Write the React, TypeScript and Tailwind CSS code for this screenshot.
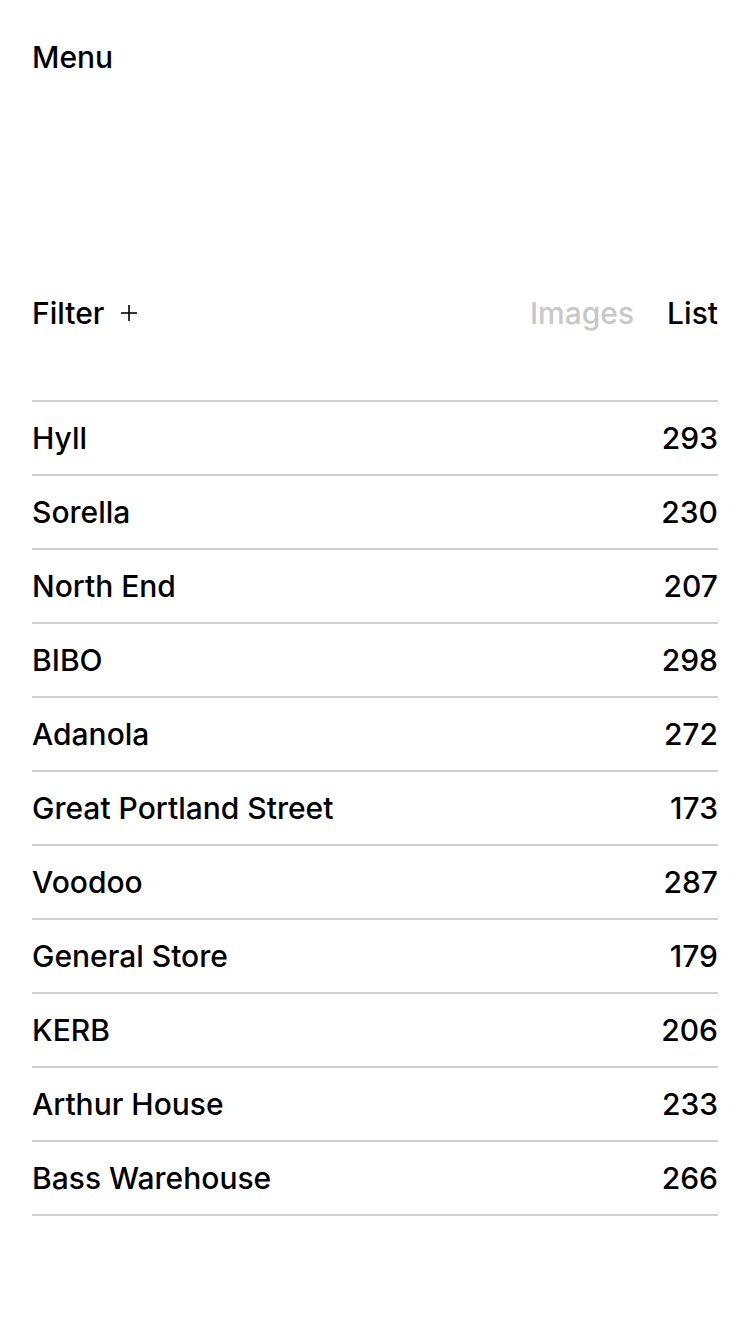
const venues = [
  { name: "Hyll", count: 293 },
  { name: "Sorella", count: 230 },
  { name: "North End", count: 207 },
  { name: "BIBO", count: 298 },
  { name: "Adanola", count: 272 },
  { name: "Great Portland Street", count: 173 },
  { name: "Voodoo", count: 287 },
  { name: "General Store", count: 179 },
  { name: "KERB", count: 206 },
  { name: "Arthur House", count: 233 },
  { name: "Bass Warehouse", count: 266 },
];

export default function App() {
  return (
    <div className="min-h-screen bg-white px-8 text-black font-['Inter',sans-serif] text-[30px] font-medium leading-none">
      <header className="pt-[42px]">
        <span>Menu</span>
      </header>

      <div className="mt-[226px] flex items-center justify-between h-[30px]">
        <div className="flex items-center gap-4">
          <span>Filter</span>
          <svg width="18" height="18" viewBox="0 0 18 18" className="stroke-black" strokeWidth="1.6">
            <line x1="9" y1="1" x2="9" y2="17" />
            <line x1="1" y1="9" x2="17" y2="9" />
          </svg>
        </div>
        <div className="flex items-center gap-[33px]">
          <span className="text-[#c8c8c8]">Images</span>
          <span>List</span>
        </div>
      </div>

      <ul className="mt-[72px] border-t-2 border-[#d0d0d0]">
        {venues.map((v) => (
          <li
            key={v.name}
            className="flex h-[74px] items-center justify-between border-b-2 border-[#d0d0d0]"
          >
            <span>{v.name}</span>
            <span>{v.count}</span>
          </li>
        ))}
      </ul>
    </div>
  );
}
